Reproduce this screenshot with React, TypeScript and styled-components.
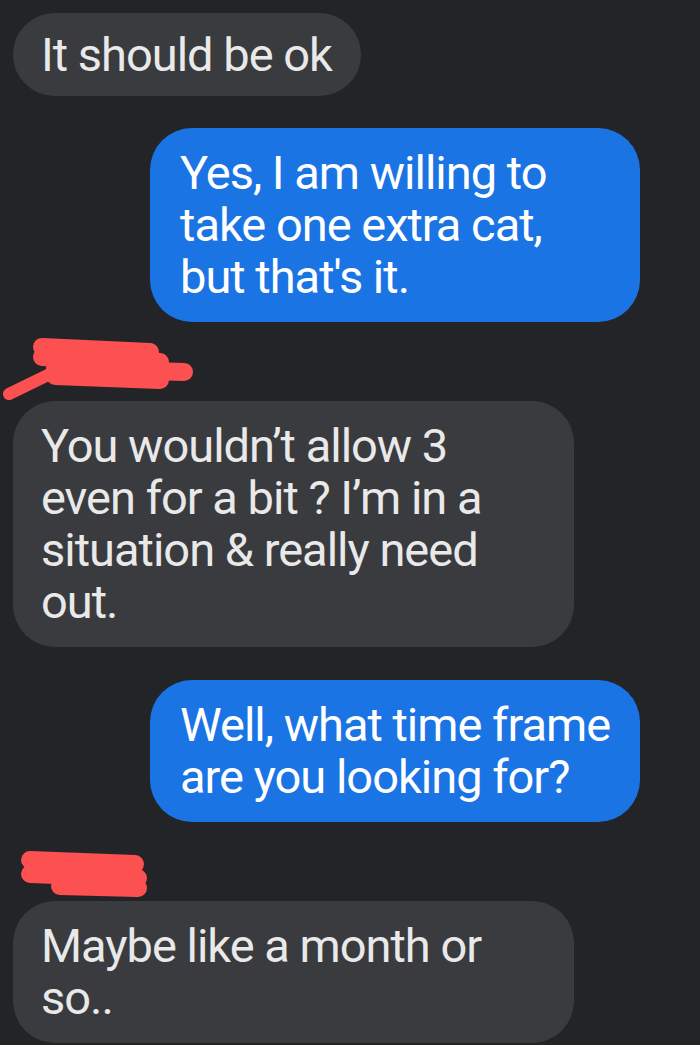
import React from "react";
import styled, { createGlobalStyle } from "styled-components";

const GlobalStyle = createGlobalStyle`
  html, body {
    margin: 0;
    padding: 0;
    background: #232427;
  }
`;

const Thread = styled.div`
  width: 700px;
  height: 1045px;
  overflow: hidden;
  background: #232427;
  padding-top: 13px;
  box-sizing: border-box;
  display: flex;
  flex-direction: column;
  font-family: Roboto, "Noto Sans", sans-serif;
`;

const Bubble = styled.div<{ $mine?: boolean; $width?: number; $pad?: number; $gap?: number }>`
  align-self: ${(p) => (p.$mine ? "flex-end" : "flex-start")};
  margin: ${(p) => p.$gap ?? 0}px ${(p) => (p.$mine ? 60 : 0)}px 0 ${(p) => (p.$mine ? 0 : 13)}px;
  width: ${(p) => (p.$width ? `${p.$width}px` : "auto")};
  box-sizing: border-box;
  padding: ${(p) => p.$pad ?? 19}px 29px;
  padding-left: ${(p) => (p.$mine ? 30 : 28)}px;
  border-radius: 42px;
  background: ${(p) => (p.$mine ? "#1b74e4" : "#3a3b3e")};
  color: ${(p) => (p.$mine ? "#ffffff" : "#e9e9ea")};
  font-size: 47px;
  line-height: 52px;
  letter-spacing: -1px;
  white-space: nowrap;
`;

const Redacted = styled.svg`
  display: block;
  flex-shrink: 0;
`;

const stroke = {
  stroke: "#fd5151",
  strokeLinecap: "round" as const,
  fill: "none",
};

const NameScribbleOne: React.FC = () => (
  <Redacted width="200" height="79" viewBox="0 0 200 79">
    <g {...stroke} strokeWidth={18}>
      <path d="M42 25 L150 30" />
      <path d="M42 35 L160 40" />
      <path d="M55 46 L184 50" />
      <path d="M55 54 L160 58" />
    </g>
    <path {...stroke} strokeWidth={12} d="M9 72 L50 52" />
  </Redacted>
);

const NameScribbleTwo: React.FC = () => (
  <Redacted width="200" height="79" viewBox="0 0 200 79">
    <g {...stroke} strokeWidth={18}>
      <path d="M30 38 L135 42" />
      <path d="M30 52 L138 56" />
      <path d="M60 64 L138 66" />
    </g>
  </Redacted>
);

const App: React.FC = () => {
  return (
    <>
      <GlobalStyle />
      <Thread>
        <Bubble $pad={15.5}>It should be ok</Bubble>

        <Bubble $mine $width={490} $gap={32}>
          Yes, I am willing to
          <br />
          take one extra cat,
          <br />
          but that's it.
        </Bubble>

        <NameScribbleOne />

        <Bubble $width={561}>
          You wouldn’t allow 3
          <br />
          even for a bit ? I’m in a
          <br />
          situation &amp; really need
          <br />
          out.
        </Bubble>

        <Bubble $mine $width={490} $gap={33}>
          Well, what time frame
          <br />
          are you looking for?
        </Bubble>

        <NameScribbleTwo />

        <Bubble $width={561}>
          Maybe like a month or
          <br />
          so..
        </Bubble>
      </Thread>
    </>
  );
};

export default App;
